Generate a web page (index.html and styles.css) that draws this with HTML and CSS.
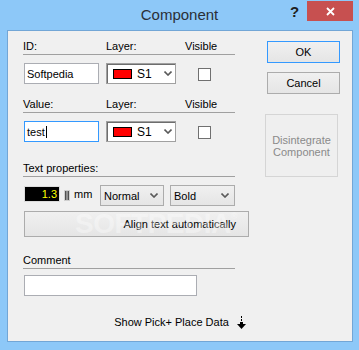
FILE: index.html
```html
<!DOCTYPE html>
<html lang="en">
<head>
    <meta charset="UTF-8">
    <title>Component</title>
    <link rel="stylesheet" href="styles.css">
</head>
<body>
    <div class="window">
        <div class="titlebar">
            <div class="title-spacer"></div>
            <div class="title">Component</div>
            <div class="caption">
                <span class="help">?</span>
                <span class="close">
                    <svg width="9" height="9" viewBox="0 0 9 9"><path d="M1 1L8 8M8 1L1 8" stroke="#fff" stroke-width="1.8"/></svg>
                </span>
            </div>
        </div>

        <div class="client">
            <div class="columns">
                <div class="main">
                    <div class="head">
                        <span>ID:</span><span>Layer:</span><span>Visible</span>
                    </div>
                    <div class="row">
                        <div class="field">Softpedia</div>
                        <div class="layer">
                            <span class="swatch"></span>
                            <span class="layer-name">S1</span>
                            <svg class="chevron" width="8" height="5" viewBox="0 0 8 5"><path d="M0.5 0.5L4 4L7.5 0.5" fill="none" stroke="#5a5a5a" stroke-width="1.6"/></svg>
                        </div>
                        <span class="check"></span>
                    </div>

                    <div class="head value-head">
                        <span>Value:</span><span>Layer:</span><span>Visible</span>
                    </div>
                    <div class="row">
                        <div class="field focused">test<span class="caret"></span></div>
                        <div class="layer">
                            <span class="swatch"></span>
                            <span class="layer-name">S1</span>
                            <svg class="chevron" width="8" height="5" viewBox="0 0 8 5"><path d="M0.5 0.5L4 4L7.5 0.5" fill="none" stroke="#5a5a5a" stroke-width="1.6"/></svg>
                        </div>
                        <span class="check"></span>
                    </div>

                    <div class="head text-head">
                        <span>Text properties:</span>
                    </div>
                    <div class="text-row">
                        <div class="size-box">1.3</div>
                        <svg class="spin" width="6" height="11" viewBox="0 0 6 11">
                            <rect x="0" y="0" width="6" height="11" fill="#d0d0d0"/>
                            <rect x="1" y="1" width="1.5" height="9" fill="#505050"/>
                            <rect x="3.5" y="1" width="1.5" height="9" fill="#505050"/>
                        </svg>
                        <span class="unit">mm</span>
                        <div class="combo style-combo">
                            <span>Normal</span>
                            <svg width="8" height="5" viewBox="0 0 8 5"><path d="M0.5 0.5L4 4L7.5 0.5" fill="none" stroke="#5a5a5a" stroke-width="1.6"/></svg>
                        </div>
                        <div class="combo weight-combo">
                            <span>Bold</span>
                            <svg width="8" height="5" viewBox="0 0 8 5"><path d="M0.5 0.5L4 4L7.5 0.5" fill="none" stroke="#5a5a5a" stroke-width="1.6"/></svg>
                        </div>
                    </div>
                    <button class="btn align-btn">Align text automatically</button>

                    <div class="head comment-head">
                        <span>Comment</span>
                    </div>
                    <div class="field comment-field"></div>
                </div>

                <div class="side">
                    <button class="btn ok-btn">OK</button>
                    <button class="btn cancel-btn">Cancel</button>
                    <button class="btn disabled-btn">Disintegrate<br>Component</button>
                </div>
            </div>

            <div class="footer">
                <span>Show Pick+ Place Data</span>
                <svg width="9" height="13" viewBox="0 0 9 13">
                    <rect x="4" y="0" width="1" height="2" fill="#000"/>
                    <rect x="4" y="3" width="1" height="2" fill="#000"/>
                    <rect x="3" y="6" width="3" height="3" fill="#000"/>
                    <polygon points="0,8 9,8 4.5,13" fill="#000"/>
                </svg>
            </div>

            <div class="watermark">SOFTPEDIA<sup>®</sup></div>
        </div>
    </div>
</body>
</html>
```

FILE: styles.css
```css
* {
    box-sizing: border-box;
}
body {
    margin: 0;
    background-color: #8dc8f8;
    font-family: "Liberation Sans", Arial, sans-serif;
    font-size: 11px;
    color: #000;
}
.window {
    width: 359px;
    height: 350px;
}
.titlebar {
    display: flex;
    height: 30px;
}
.title-spacer {
    width: 69px;
}
.title {
    flex: 1;
    text-align: center;
    line-height: 30px;
    font-size: 15px;
    color: #2a2f36;
}
.caption {
    display: flex;
    align-items: flex-start;
    width: 69px;
}
.help {
    width: 7px;
    margin-top: 4px;
    margin-right: 10px;
    font-size: 15px;
    line-height: 15px;
    font-weight: bold;
    color: #1e1e1e;
}
.close {
    display: flex;
    align-items: center;
    justify-content: center;
    width: 46px;
    height: 20px;
    margin-top: 1px;
    background-color: #c75050;
}
.client {
    position: relative;
    width: 346px;
    height: 312px;
    margin-left: 7px;
    background-color: #f0f0f0;
    border: 1px solid #72a6d6;
}
.columns {
    display: flex;
}
.main {
    width: 227px;
    padding: 9px 0 0 15px;
}
.head {
    display: grid;
    grid-template-columns: 83px 79px 1fr;
    line-height: 13px;
    padding-bottom: 1px;
    border-bottom: 1px solid #a0a0a0;
}
.value-head {
    margin-top: 14px;
}
.text-head {
    margin-top: 20px;
}
.comment-head {
    margin-top: 17px;
}
.row {
    display: grid;
    grid-template-columns: 83px 79px 1fr;
    align-items: start;
    height: 21px;
    margin-top: 8px;
}
.field {
    display: flex;
    align-items: center;
    width: 75px;
    height: 21px;
    margin-left: 1px;
    padding-left: 2px;
    background: #fff;
    border: 1px solid #abadb3;
}
.field.focused {
    border-color: #3399ff;
}
.caret {
    width: 1px;
    height: 12px;
    margin-left: 1px;
    background: #000;
}
.comment-field {
    width: 173px;
    margin-top: 6px;
}
.layer {
    display: flex;
    align-items: center;
    width: 70px;
    height: 21px;
    padding-left: 6px;
    background: #fff;
    border: 1px solid #a0a0a0;
    box-shadow: inset 1px 1px 0 #6d6d6d;
}
.swatch {
    width: 19px;
    height: 10px;
    background: #ff0000;
    border: 1px solid #000;
}
.layer-name {
    margin-left: 5px;
    font-size: 12px;
}
.chevron {
    margin-left: auto;
    margin-right: 3px;
}
.check {
    width: 13px;
    height: 13px;
    margin: 5px 0 0 13px;
    background: #fff;
    border: 1px solid #707070;
}
.text-row {
    display: flex;
    align-items: flex-start;
    height: 21px;
    margin-top: 8px;
}
.size-box {
    width: 36px;
    height: 16px;
    margin: 1px 0 0 1px;
    padding-right: 2px;
    line-height: 14px;
    text-align: right;
    color: #ffff00;
    background: #000;
    border: 1px solid #dcdcdc;
}
.spin {
    margin: 5px 0 0 4px;
}
.unit {
    width: 26px;
    margin-left: 4px;
    line-height: 19px;
}
.combo {
    display: flex;
    align-items: center;
    justify-content: space-between;
    height: 21px;
    padding: 0 5px 0 3px;
    background: linear-gradient(#f0f0f0, #e5e5e5);
    border: 1px solid #acacac;
}
.style-combo {
    width: 64px;
}
.weight-combo {
    width: 65px;
    margin-left: 6px;
}
.btn {
    display: flex;
    align-items: center;
    justify-content: center;
    padding: 0;
    font-family: "Liberation Sans", Arial, sans-serif;
    font-size: 11px;
    color: #000;
    background: linear-gradient(#f0f0f0, #e5e5e5);
    border: 1px solid #acacac;
}
.align-btn {
    justify-content: flex-end;
    width: 225px;
    height: 26px;
    margin: 5px 0 0 1px;
    padding-right: 12px;
}
.side {
    display: flex;
    flex-direction: column;
    width: 76px;
    margin-left: 30px;
    padding-top: 10px;
}
.ok-btn, .cancel-btn {
    width: 73px;
    height: 22px;
    margin-left: 2px;
}
.ok-btn {
    border-color: #3399ff;
}
.cancel-btn {
    margin-top: 9px;
}
.disabled-btn {
    width: 73px;
    height: 63px;
    margin-top: 20px;
    line-height: 12px;
    color: #8a8a8a;
    background: #efefef;
    border-color: #d5d5d5;
}
.footer {
    display: flex;
    justify-content: center;
    align-items: center;
    gap: 8px;
    margin-top: 20px;
    line-height: 13px;
}
.watermark {
    position: absolute;
    left: 67px;
    top: 171px;
    font-size: 28px;
    line-height: 28px;
    font-weight: bold;
    letter-spacing: -0.5px;
    color: rgba(255, 255, 255, 0.35);
    pointer-events: none;
}
.watermark sup {
    font-size: 9px;
    vertical-align: 14px;
}
```
